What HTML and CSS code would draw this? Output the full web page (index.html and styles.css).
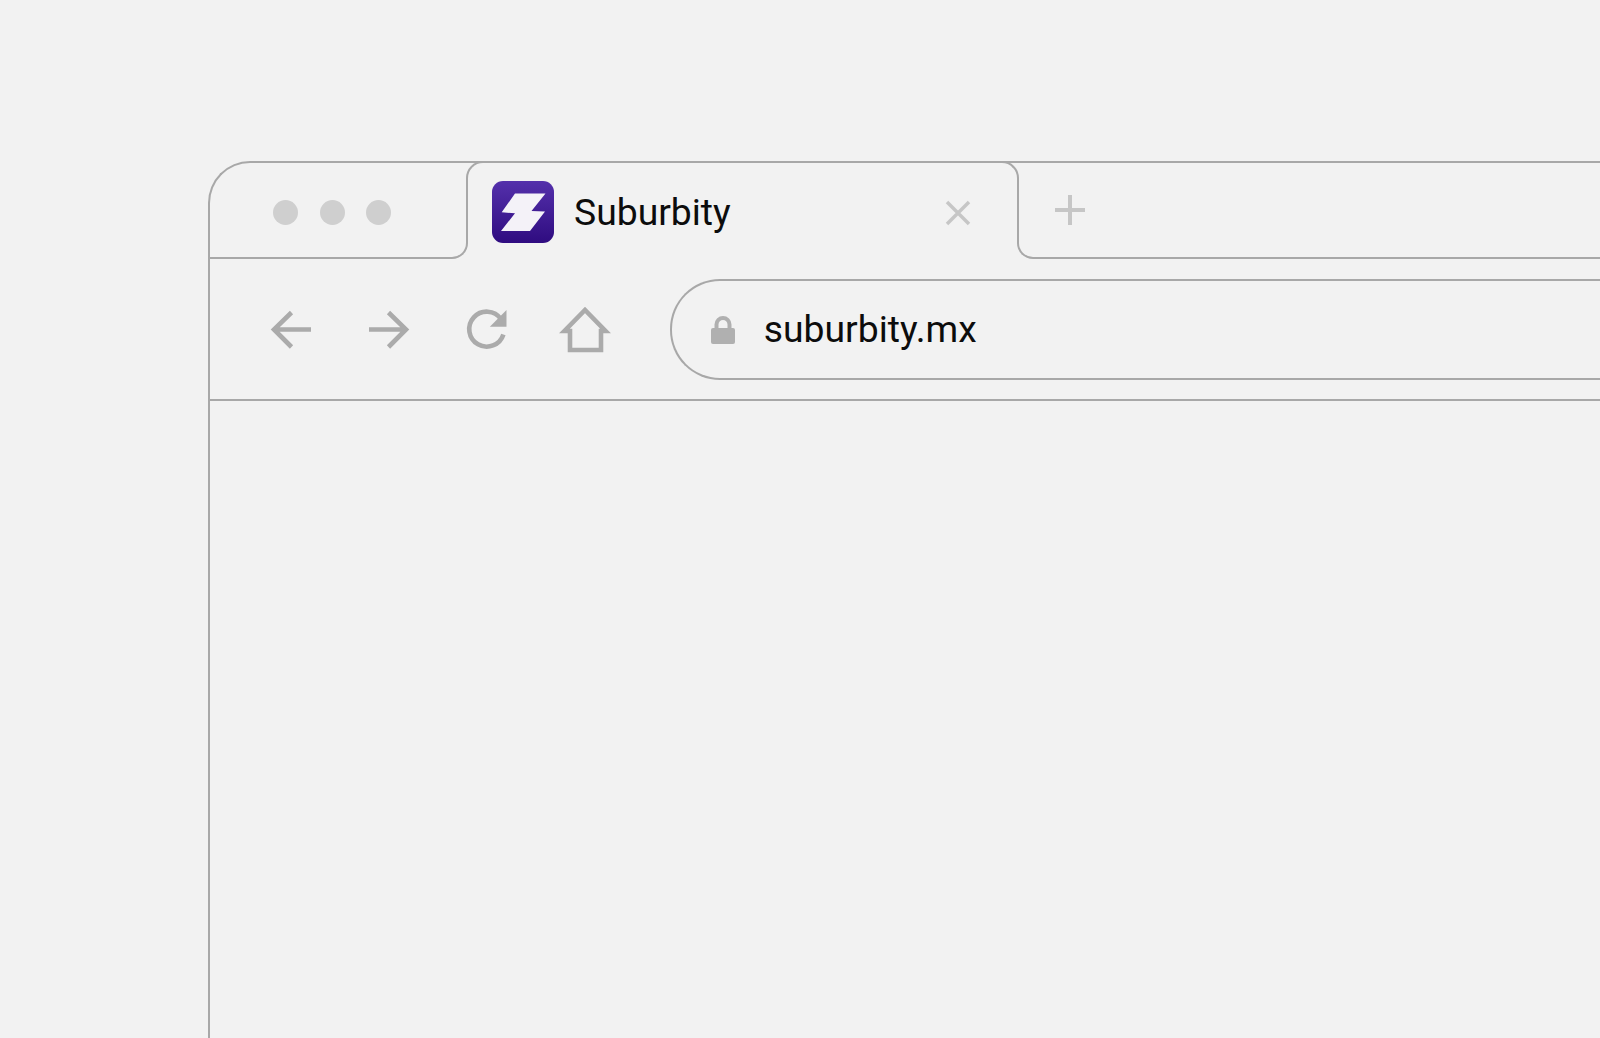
FILE: index.html
```html
<!DOCTYPE html>
<html lang="en">
<head>
<meta charset="utf-8">
<title>Suburbity</title>
<link rel="stylesheet" href="styles.css">
</head>
<body>
<div class="window">
  <div class="tabbar">
    <div class="dots">
      <span class="dot"></span>
      <span class="dot"></span>
      <span class="dot"></span>
    </div>
    <div class="tab">
      <svg class="favicon" viewBox="0 0 62 62" aria-hidden="true">
        <defs>
          <linearGradient id="fav" x1="0" y1="0" x2="0" y2="1">
            <stop offset="0" stop-color="#5430ab"/>
            <stop offset="1" stop-color="#2f0c80"/>
          </linearGradient>
        </defs>
        <rect width="62" height="62" rx="11" fill="url(#fav)"/>
        <polygon points="23,12.500 53.500,12.500 39.500,30 53,30.500 38,50 9,50 23,32.300 9.700,31.300" fill="#f4f2f8"/>
      </svg>
      <span class="tab-title">Suburbity</span>
      <svg class="tab-close" viewBox="0 0 26 26" aria-hidden="true">
        <path d="M2 2 L24 24 M24 2 L2 24"/>
      </svg>
    </div>
    <div class="tab-rest">
      <svg class="tab-new" viewBox="0 0 30 30" aria-hidden="true">
        <path d="M0 15 H30 M15 0 V30"/>
      </svg>
    </div>
  </div>
  <div class="toolbar">
    <div class="nav">
      <svg class="nav-icon" viewBox="0 0 48 48" aria-hidden="true">
        <path d="M44 24.500 H7 M24.500 7.500 L7 24.500 L24.500 42"/>
      </svg>
      <svg class="nav-icon" viewBox="0 0 48 48" aria-hidden="true">
        <path d="M4 24.500 H41 M23.500 7.500 L41 24.500 L23.500 42"/>
      </svg>
      <svg class="nav-icon" viewBox="0 0 48 48" aria-hidden="true">
        <path d="M39 14 A17.500 17.500 0 1 0 41.400 29.500"/>
        <polygon class="solid" points="44.500,5 44.500,21.700 27.800,21.700"/>
      </svg>
      <svg class="nav-icon" viewBox="0 0 48 48" aria-hidden="true">
        <path d="M4.500 26 H10 V45 H41 V26 H45.500 L25 5 Z"/>
      </svg>
    </div>
    <div class="address">
      <svg class="lock" viewBox="0 0 24 28" aria-hidden="true">
        <path class="shackle" d="M5.500 14 V8.500 A6.500 6.500 0 0 1 18.500 8.500 V14"/>
        <rect y="12" width="24" height="16" rx="2"/>
      </svg>
      <span class="url">suburbity.mx</span>
    </div>
  </div>
</div>
</body>
</html>
```
FILE: styles.css
```css
html, body {
  margin: 0;
  height: 100%;
  overflow: hidden;
  background: #f2f2f2;
}

.window {
  box-sizing: border-box;
  margin: 161px 0 0 208px;
  width: 1500px;
  height: 900px;
  border-top: 2px solid #a8a8a8;
  border-left: 2px solid #a8a8a8;
  border-top-left-radius: 42px;
  font-family: Roboto, "Liberation Sans", sans-serif;
  color: #0c0c0c;
}

.tabbar {
  display: flex;
  align-items: flex-start;
  height: 96px;
}

.dots {
  box-sizing: border-box;
  width: 240px;
  height: 96px;
  padding: 4px 0 0 63px;
  display: flex;
  align-items: center;
  gap: 21.500px;
  border-bottom: 2px solid #a8a8a8;
}

.dot {
  width: 25px;
  height: 25px;
  border-radius: 50%;
  background: #cfcfcf;
}

.tab {
  box-sizing: border-box;
  position: relative;
  width: 553px;
  height: 80px;
  margin: -2px 16px 0;
  padding: 20px 0 0 24px;
  display: flex;
  align-items: center;
  border: 2px solid #a8a8a8;
  border-bottom: 0;
  border-radius: 17px 17px 0 0;
}

.tab::before,
.tab::after {
  content: "";
  box-sizing: border-box;
  position: absolute;
  bottom: -18px;
  width: 18px;
  height: 18px;
  border-bottom: 2px solid #a8a8a8;
}

.tab::before {
  left: -18px;
  border-right: 2px solid #a8a8a8;
  border-bottom-right-radius: 16px;
}

.tab::after {
  right: -18px;
  border-left: 2px solid #a8a8a8;
  border-bottom-left-radius: 16px;
}

.favicon {
  width: 62px;
  height: 62px;
  flex: none;
}

.tab-title {
  margin-left: 20px;
  font-size: 37.300px;
}

.tab-close {
  width: 26px;
  height: 26px;
  margin-left: auto;
  margin-right: 46px;
  margin-top: 2px;
  fill: none;
  stroke: #c6c6c6;
  stroke-width: 3.500;
}

.tab-rest {
  box-sizing: border-box;
  flex: 1;
  height: 96px;
  display: flex;
  align-items: center;
  padding: 0 0 0 20px;
  border-bottom: 2px solid #a8a8a8;
}

.tab-new {
  width: 30px;
  height: 30px;
  fill: none;
  stroke: #c6c6c6;
  stroke-width: 4;
}

.toolbar {
  box-sizing: border-box;
  height: 142px;
  padding: 20px 0 19px 57px;
  display: flex;
  align-items: center;
  border-bottom: 2px solid #a8a8a8;
}

.nav {
  display: flex;
  gap: 49.600px;
  margin-bottom: 2px;
}

.nav-icon {
  width: 48px;
  height: 48px;
  overflow: visible;
  fill: none;
  stroke: #ababab;
  stroke-width: 4.600;
}

.nav-icon .solid {
  fill: #ababab;
  stroke: none;
}

.address {
  box-sizing: border-box;
  flex: 1;
  height: 101px;
  margin-left: 62px;
  padding-left: 39px;
  display: flex;
  align-items: center;
  gap: 29px;
  border: 2px solid #a8a8a8;
  border-right: 0;
  border-radius: 50px 0 0 50px;
}

.lock {
  width: 24px;
  height: 28px;
  fill: #b0b0b0;
}

.lock .shackle {
  fill: none;
  stroke: #b0b0b0;
  stroke-width: 4;
}

.url {
  font-size: 37.300px;
  margin-bottom: 2px;
}
```
